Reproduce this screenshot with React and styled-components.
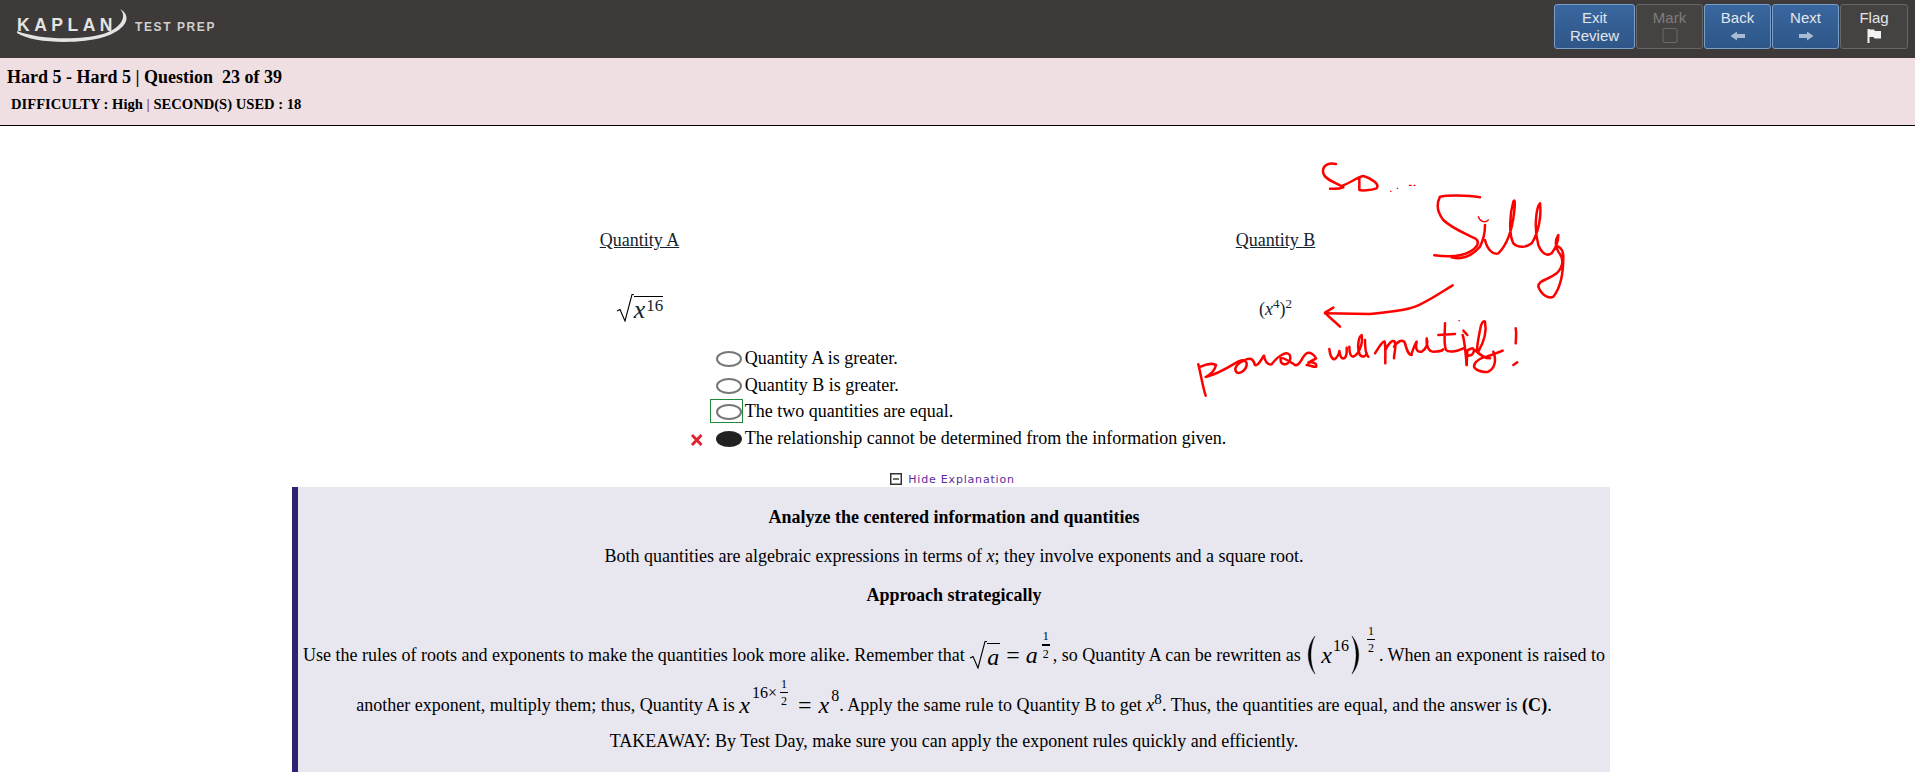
import React from "react";
import styled, { createGlobalStyle } from "styled-components";

const GlobalStyle = createGlobalStyle`
    html, body {
        margin: 0;
        padding: 0;
        background: #fff;
        overflow: hidden;
    }
    body {
        font-family: "Liberation Serif", "Times New Roman", serif;
        font-size: 18px;
        color: #000;
    }
`;

const Page = styled.div`
    position: relative;
    width: 1915px;
    height: 778px;
    overflow: hidden;
`;

const TopBar = styled.header`
    height: 58px;
    background: #3d3a39;
    display: flex;
    justify-content: space-between;
    align-items: flex-start;
    padding: 4px 7px 0 17px;
    box-sizing: border-box;
`;

const Logo = styled.div`
    position: relative;
    display: flex;
    align-items: baseline;
    padding-top: 11px;
    font-family: "Liberation Sans", Arial, sans-serif;
    font-weight: bold;
    color: #e4e4e4;
`;

const LogoWord = styled.span`
    font-size: 17.5px;
    letter-spacing: 4.5px;
    width: 118px;
`;

const LogoTag = styled.span`
    font-size: 12px;
    letter-spacing: 1.6px;
    color: #cfcfcf;
`;

const Swoosh = styled.svg`
    position: absolute;
    left: 0;
    top: 5px;
    width: 118px;
    height: 40px;
`;

const Toolbar = styled.nav`
    display: flex;
    gap: 1px;
`;

const ToolButton = styled.div`
    width: ${(p) => p.$width}px;
    height: 45px;
    box-sizing: border-box;
    border-radius: 3px;
    border: 1px solid ${(p) => (p.$blue ? "#7a9fcb" : "#676665")};
    background: ${(p) =>
        p.$blue ? "linear-gradient(#3a679f, #2e5688)" : "#454342"};
    color: ${(p) => (p.$off ? "#7d7c7b" : "#e2e6ec")};
    font-family: "Liberation Sans", Arial, sans-serif;
    font-size: 15px;
    line-height: 18px;
    text-align: center;
    display: flex;
    flex-direction: column;
    align-items: center;
    padding-top: 4px;
`;

const ButtonIcon = styled.svg`
    width: 18px;
    height: 16px;
    margin-top: 1px;
`;

const InfoBar = styled.section`
    height: 68px;
    box-sizing: border-box;
    background: #f0dfe2;
    border-bottom: 1px solid #000;
    font-weight: bold;
`;

const InfoTitle = styled.div`
    font-size: 18px;
    line-height: 20px;
    padding: 9px 0 0 7px;
    white-space: pre;
`;

const InfoMeta = styled.div`
    font-size: 14.6px;
    line-height: 16px;
    padding: 9px 0 0 11px;
`;

const Pipe = styled.span`
    color: #8a3e68;
`;

const Question = styled.main`
    display: grid;
    grid-template-columns: 636px 636px;
    justify-content: center;
    padding-top: 104px;
    padding-bottom: 15px;
    color: #14232e;
    text-align: center;
`;

const QuantityLabel = styled.div`
    line-height: 20px;
    text-decoration: underline;
`;

const QuantityValue = styled.div`
    height: 44px;
    margin-top: 36px;
    display: flex;
    justify-content: center;
    align-items: center;
`;

const PlainPower = styled.span`
    padding-top: 3px;
`;

const SmallSup = styled.sup`
    font-size: ${(p) => p.$size || 13}px;
    line-height: 0;
`;

const Options = styled.div`
    display: flex;
    flex-direction: column;
    width: max-content;
    margin: 0 auto;
`;

const OptionRow = styled.div`
    display: flex;
    align-items: center;
    height: 26.6px;
    line-height: 20px;
`;

const Mark = styled.svg`
    width: 21px;
    height: 12px;
    margin-top: 3px;
    flex: none;
`;

const RadioCell = styled.div`
    width: 33px;
    height: 24px;
    box-sizing: border-box;
    flex: none;
    display: flex;
    justify-content: flex-end;
    align-items: center;
    padding: 2px 0 0 0;
    border: 1px solid ${(p) => (p.$boxed ? "#1f8a3c" : "transparent")};
    margin-right: 2px;
`;

const Radio = styled.span`
    width: 26px;
    height: 16px;
    box-sizing: border-box;
    border-radius: 50%;
    border: 2px solid ${(p) => (p.$on ? "#222" : "#777")};
    background: ${(p) => (p.$on ? "#222" : "#fff")};
`;

const ToggleLine = styled.div`
    display: flex;
    justify-content: center;
    align-items: center;
    gap: 6px;
    height: 20px;
    margin-top: 18px;
    padding-right: 10px;
    color: #5b2a9b;
    font-family: "DejaVu Sans", Verdana, sans-serif;
    font-size: 11px;
    letter-spacing: 0.8px;
`;

const MinusBox = styled.svg`
    width: 12px;
    height: 12px;
`;

const Explanation = styled.section`
    width: 1312px;
    height: 285px;
    margin: -2px 0 0 292px;
    border-left: 6px solid #2e2273;
    background: #e8e6ef;
    text-align: center;
    line-height: 20px;
    overflow: hidden;
`;

const ExplainLine = styled.div`
    height: ${(p) => p.$height || 20}px;
    margin-top: ${(p) => p.$top}px;
    display: flex;
    align-items: center;
    justify-content: center;
    white-space: pre;
    font-weight: ${(p) => (p.$bold ? "bold" : "normal")};
`;

const TailText = styled.span`
    letter-spacing: 0.04px;
`;

const MathVar = styled.i`
    font-family: "Liberation Serif", serif;
    font-size: ${(p) => p.$size || 24}px;
    letter-spacing: 1px;
`;

const MathText = styled.span`
    font-size: 24px;
    margin: 0 ${(p) => p.$gap || 6}px;
`;

const Raised = styled.span`
    font-size: ${(p) => p.$size || 16}px;
    line-height: 1;
    align-self: flex-start;
    margin-top: ${(p) => p.$top || 0}px;
    margin-left: ${(p) => p.$left || 0}px;
`;

const MathGroup = styled.span`
    display: inline-flex;
    align-items: center;
    height: 44px;
`;

const Radical = styled.svg`
    width: 18px;
    height: 28px;
    flex: none;
`;

const Radicand = styled.span`
    display: inline-flex;
    align-items: center;
    height: 26px;
    margin-top: 2px;
    border-top: 1px solid #000;
`;

const Fraction = styled.span`
    display: inline-flex;
    flex-direction: column;
    align-items: center;
    align-self: flex-start;
    font-size: 12px;
    line-height: 13px;
    margin: ${(p) => p.$margin};
`;

const FractionTop = styled.span`
    border-bottom: ${(p) => p.$bar || 1}px solid #000;
    padding: 0 1px 1px;
`;

const FractionBottom = styled.span`
    padding-top: 2px;
`;

const BigParen = styled.svg`
    width: 10px;
    height: 40px;
    flex: none;
    margin: ${(p) => p.$margin};
`;

const Ink = styled.svg`
    position: absolute;
    left: 1150px;
    top: 140px;
    width: 450px;
    height: 270px;
    pointer-events: none;
`;

const SquareRoot = ({ children }) => (
    <>
        <Radical viewBox="0 0 18 28">
            <path d="M1 17 L4 15.5 L9 27 L16 0.5 L18 0.5" fill="none" stroke="#000" strokeWidth="1.1" />
        </Radical>
        <Radicand>{children}</Radicand>
    </>
);

const Half = ({ bar, margin }) => (
    <Fraction $margin={margin}>
        <FractionTop $bar={bar}>1</FractionTop>
        <FractionBottom>2</FractionBottom>
    </Fraction>
);

const Paren = ({ flip, margin }) => (
    <BigParen viewBox="0 0 10 40" $margin={margin}>
        <path
            d={flip ? "M1 1 C10 12 10 28 1 39 C6.5 28 6.5 12 1 1 Z" : "M9 1 C0 12 0 28 9 39 C3.5 28 3.5 12 9 1 Z"}
            fill="#000"
            stroke="#000"
            strokeWidth="0.4"
        />
    </BigParen>
);

const buttons = [
    { label: ["Exit", "Review"], width: 81, blue: true },
    { label: ["Mark"], width: 67, off: true, icon: "box" },
    { label: ["Back"], width: 67, blue: true, icon: "left" },
    { label: ["Next"], width: 67, blue: true, icon: "right" },
    { label: ["Flag"], width: 68, icon: "flag" },
];

const ButtonGlyph = ({ kind }) => {
    if (kind === "box") {
        return (
            <ButtonIcon viewBox="0 0 18 16">
                <rect x="2" y="0.5" width="14" height="14" rx="1.5" fill="none" stroke="#6d6c6b" />
            </ButtonIcon>
        );
    }
    if (kind === "left") {
        return (
            <ButtonIcon viewBox="0 0 18 16">
                <path d="M1.5 8 L8 3.5 V6 H16 V10 H8 V12.5 Z" fill="#a9bcd4" />
            </ButtonIcon>
        );
    }
    if (kind === "right") {
        return (
            <ButtonIcon viewBox="0 0 18 16">
                <path d="M16.5 8 L10 3.5 V6 H2 V10 H10 V12.5 Z" fill="#a9bcd4" />
            </ButtonIcon>
        );
    }
    if (kind === "flag") {
        return (
            <ButtonIcon viewBox="0 0 18 16">
                <path d="M2.5 1 H4.5 V15 H2.5 Z M4.5 1.5 H9 L10 3 H16 V10.5 H9.5 L8.5 9 H4.5 Z" fill="#f2f2f2" />
            </ButtonIcon>
        );
    }
    return null;
};

const options = [
    { text: "Quantity A is greater." },
    { text: "Quantity B is greater." },
    { text: "The two quantities are equal.", correct: true },
    { text: "The relationship cannot be determined from the information given.", picked: true },
];

export default function App() {
    return (
        <Page>
            <GlobalStyle />
            <TopBar>
                <Logo>
                    <LogoWord>KAPLAN</LogoWord>
                    <LogoTag>TEST PREP</LogoTag>
                    <Swoosh viewBox="0 0 118 40">
                        <path
                            d="M0 24 C15 34 60 36 87 28 C107 22 117 8 103 0 C111 8 103 20 86 25 C60 32 20 30 0 22 Z"
                            fill="#e4e4e4"
                        />
                    </Swoosh>
                </Logo>
                <Toolbar>
                    {buttons.map((b) => (
                        <ToolButton key={b.label[0]} $width={b.width} $blue={b.blue} $off={b.off}>
                            {b.label.map((line) => (
                                <span key={line}>{line}</span>
                            ))}
                            {b.icon && <ButtonGlyph kind={b.icon} />}
                        </ToolButton>
                    ))}
                </Toolbar>
            </TopBar>

            <InfoBar>
                <InfoTitle>Hard 5 - Hard 5 | Question  23 of 39</InfoTitle>
                <InfoMeta>
                    DIFFICULTY : High <Pipe>|</Pipe> SECOND(S) USED : 18
                </InfoMeta>
            </InfoBar>

            <Question>
                <div>
                    <QuantityLabel>Quantity A</QuantityLabel>
                    <QuantityValue>
                        <SquareRoot>
                            <MathVar $size={26}>x</MathVar>
                            <Raised $size={17}>16</Raised>
                        </SquareRoot>
                    </QuantityValue>
                </div>
                <div>
                    <QuantityLabel>Quantity B</QuantityLabel>
                    <QuantityValue>
                        <PlainPower>
                            (<i>x</i>
                            <SmallSup>4</SmallSup>)<SmallSup>2</SmallSup>
                        </PlainPower>
                    </QuantityValue>
                </div>
            </Question>

            <Options>
                {options.map((o) => (
                    <OptionRow key={o.text}>
                        <Mark viewBox="0 0 21 12">
                            {o.picked && (
                                <path d="M3 1 L12.5 11 M12.5 1 L3 11" stroke="#e0202f" strokeWidth="2.8" fill="none" />
                            )}
                        </Mark>
                        <RadioCell $boxed={o.correct}>
                            <Radio $on={o.picked} />
                        </RadioCell>
                        {o.text}
                    </OptionRow>
                ))}
            </Options>

            <ToggleLine>
                <MinusBox viewBox="0 0 12 12">
                    <rect x="0.75" y="0.75" width="10.5" height="10.5" fill="none" stroke="#333" strokeWidth="1.5" />
                    <path d="M3 6 H9" stroke="#333" strokeWidth="1.4" />
                </MinusBox>
                Hide Explanation
            </ToggleLine>

            <Explanation>
                <ExplainLine $top={20} $bold>Analyze the centered information and quantities</ExplainLine>
                <ExplainLine $top={19}>
                    <span>
                        Both quantities are algebraic expressions in terms of <i>x</i>; they involve exponents and a square root.
                    </span>
                </ExplainLine>
                <ExplainLine $top={19} $bold>Approach strategically</ExplainLine>
                <ExplainLine $top={28} $height={44}>
                    {"Use the rules of roots and exponents to make the quantities look more alike. Remember that "}
                    <MathGroup>
                        <SquareRoot><MathVar>a</MathVar></SquareRoot>
                        <MathText>=</MathText>
                        <MathVar>a</MathVar>
                        <Half bar={2} margin="-3px 3px 0" />
                    </MathGroup>
                    {", so Quantity A can be rewritten as "}
                    <MathGroup>
                        <Paren margin="0 5px 0 1px" />
                        <MathVar>x</MathVar>
                        <Raised $top={5}>16</Raised>
                        <Paren flip margin="0 0 0 2px" />
                        <Half margin="-8px 4px 0 6px" />
                    </MathGroup>
                    . When an exponent is raised to
                </ExplainLine>
                <ExplainLine $top={13} $height={30}>
                    {"another exponent, multiply them; thus, Quantity A is "}
                    <MathGroup>
                        <MathVar>x</MathVar>
                        <Raised $top={2} $left={1}>16×</Raised>
                        <Half margin="-5px 3px 0" />
                        <MathText $gap={7}>=</MathText>
                        <MathVar>x</MathVar>
                        <Raised $top={5} $left={1}>8</Raised>
                    </MathGroup>
                    <TailText>
                        . Apply the same rule to Quantity B to get <i>x</i>
                        <SmallSup $size={15}>8</SmallSup>
                        . Thus, the quantities are equal, and the answer is <b>(C)</b>.
                    </TailText>
                </ExplainLine>
                <ExplainLine $top={11}>
                    TAKEAWAY: By Test Day, make sure you can apply the exponent rules quickly and efficiently.
                </ExplainLine>
            </Explanation>

            <Ink viewBox="0 0 1350 810" fill="none" stroke="#fe0000" strokeWidth="7.5" strokeLinecap="round" strokeLinejoin="round">
                {/* So ... */}
                <path d="M558 72 C530 66 515 80 520 100 C525 120 560 128 580 142 C565 148 550 146 540 146" />
                <path d="M575 138 C600 130 620 112 640 108 C665 115 690 132 680 145 C660 152 635 152 628 150 L628 112" />
                <path d="M722 154 h1 M742 145 h1 M778 136 h6 M792 136 h3" strokeWidth="4" />
                {/* Silly */}
                <path d="M990 172 C950 165 890 165 870 170 C860 190 860 215 880 240 C905 265 945 280 975 295 C990 305 985 320 960 335 C935 350 900 352 853 346" />
                <path d="M905 352 C930 358 960 355 990 320 C1000 300 1005 270 1005 255" />
                <path d="M985 230 C990 245 1005 250 1015 240" strokeWidth="4" />
                <path d="M1005 300 C1012 330 1030 345 1045 340 C1065 320 1085 280 1092 220 C1096 190 1095 175 1090 185 C1080 220 1075 280 1090 310 C1105 325 1130 322 1145 310 C1165 280 1175 230 1170 190 C1160 200 1150 260 1165 315 C1175 340 1190 350 1205 340 C1220 320 1225 300 1225 285 C1215 300 1215 320 1225 335 C1245 360 1240 380 1220 400 C1195 420 1165 420 1165 440 C1175 465 1195 478 1210 470 C1230 445 1240 410 1240 350 C1240 335 1235 325 1225 320" />
                {/* arrow */}
                <path d="M908 436 C860 465 820 495 780 505 C740 515 700 518 660 522 L525 520" />
                <path d="M550 503 L525 518 C535 530 555 545 570 560" />
                {/* powers will */}
                <g transform="translate(120 525)">
                    <path d="M25 148 C32 175 38 215 47 242" />
                    <path d="M32 155 C55 145 72 145 78 150 C75 165 62 178 47 186 C80 178 110 160 135 145 C150 135 165 130 170 145 C172 165 150 178 140 172 C130 162 140 145 165 135 C185 125 190 135 195 150 C205 155 215 130 222 122 C225 140 232 150 245 148 C255 135 265 125 275 120 C290 110 305 115 300 135 C290 155 270 150 272 130 C280 125 300 140 315 150 C330 155 335 125 350 115 C360 110 375 120 378 130 C370 135 360 140 355 143 C370 140 382 145 378 155 C370 157 360 150 350 150" />
                    <path d="M418 102 C420 120 425 135 435 132 C445 125 448 110 448 108 C450 125 455 135 465 128 C472 118 470 105 470 98" />
                    <path d="M478 95 C478 110 480 125 490 125 C505 118 520 90 515 60 C505 65 500 100 510 120 C520 130 530 120 530 115" />
                    <path d="M525 75 C525 100 528 120 535 125" />
                </g>
                {/* multiply ! */}
                <g transform="translate(660 510)">
                    <path d="M15 130 C25 115 38 92 44 95 C48 115 45 140 46 160 M46 120 C55 100 68 88 74 95 C80 110 72 130 72 145 M72 110 C85 90 100 88 105 100 C110 118 115 135 125 135" />
                    <path d="M125 130 C130 118 135 100 140 95 C135 115 140 128 155 125 C170 115 175 100 170 85 C168 105 175 125 190 125 C205 125 215 125 220 118" />
                    <path d="M225 40 C225 70 220 100 228 120 C235 128 260 125 280 115 M205 75 L255 72" />
                    <path d="M267 32 h1" strokeWidth="4" />
                    <path d="M278 75 C283 90 285 105 290 165 M280 62 L292 75" />
                    <path d="M292 120 L290 165 M295 120 C310 108 318 120 305 135 L290 138" />
                    <path d="M345 35 C350 60 345 90 325 125 C318 130 322 100 330 60 C333 40 340 30 345 35" />
                    <path d="M315 120 C330 135 345 145 360 145 M398 122 C380 130 365 135 350 140" />
                    <path d="M370 125 C380 150 375 175 355 185 C335 188 315 180 312 170 C312 155 325 148 340 142" />
                    <path d="M437 55 C440 70 438 85 437 100 M430 165 L442 157" />
                </g>
            </Ink>
        </Page>
    );
}
